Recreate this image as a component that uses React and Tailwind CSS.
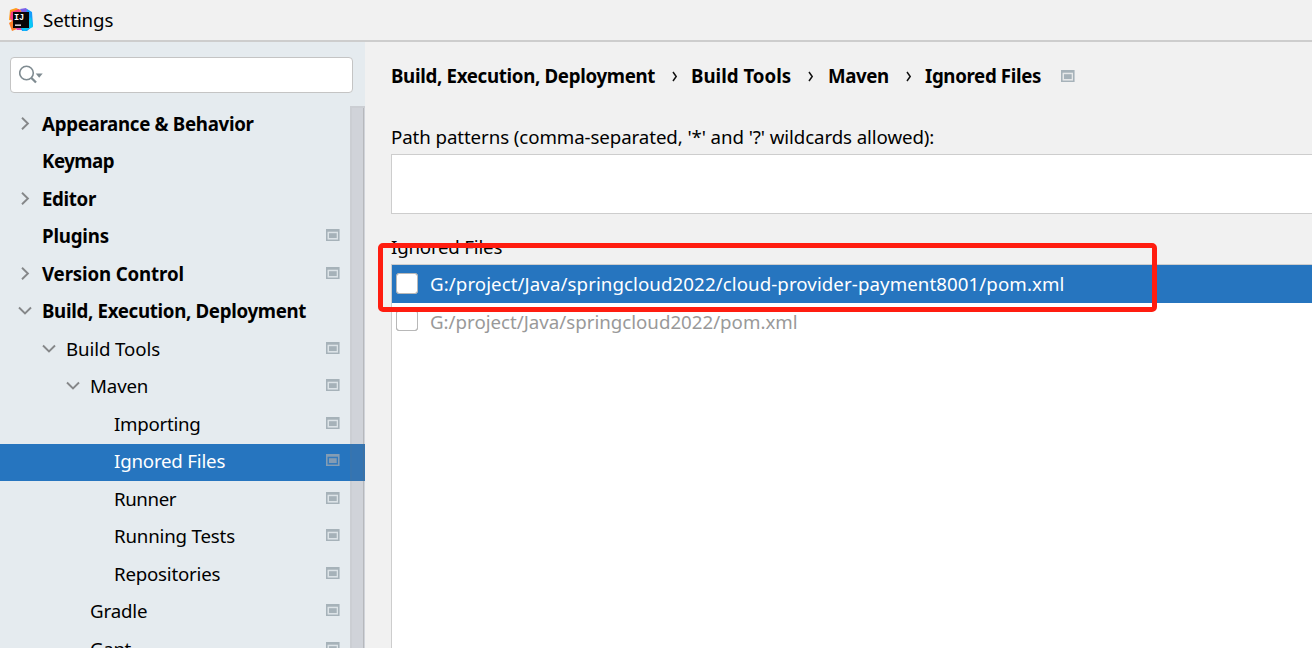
import React from "react";

const ROWS = [
  { label: "Appearance & Behavior", indent: "pl-[18px]", arrow: "right", bold: true, track: "tracking-[-0.3px]" },
  { label: "Keymap", indent: "pl-[18px]", bold: true, track: "tracking-[-0.5px]" },
  { label: "Editor", indent: "pl-[18px]", arrow: "right", bold: true, track: "tracking-[-0.35px]" },
  { label: "Plugins", indent: "pl-[18px]", bold: true, badge: true, track: "tracking-[-0.2px]" },
  { label: "Version Control", indent: "pl-[18px]", arrow: "right", bold: true, badge: true, track: "tracking-[-0.15px]" },
  { label: "Build, Execution, Deployment", indent: "pl-[18px]", arrow: "down", bold: true, track: "tracking-[-0.32px]" },
  { label: "Build Tools", indent: "pl-[42px]", arrow: "down", badge: true, track: "tracking-[-0.1px]" },
  { label: "Maven", indent: "pl-[66px]", arrow: "down", badge: true, track: "tracking-[-0.15px]" },
  { label: "Importing", indent: "pl-[90px]", badge: true, track: "tracking-[-0.28px]" },
  { label: "Ignored Files", indent: "pl-[90px]", badge: true, selected: true, track: "tracking-[-0.2px]" },
  { label: "Runner", indent: "pl-[90px]", badge: true, track: "tracking-[-0.4px]" },
  { label: "Running Tests", indent: "pl-[90px]", badge: true, track: "tracking-[-0.18px]" },
  { label: "Repositories", indent: "pl-[90px]", badge: true, track: "tracking-[-0.22px]" },
  { label: "Gradle", indent: "pl-[66px]", badge: true, track: "tracking-[-0.15px]" },
  { label: "Gant", indent: "pl-[66px]", badge: true, track: "tracking-[-0.35px]" },
];

function ProjectBadge({ selected }) {
  const color = selected ? "#849db4" : "#a6b2b9";
  return (
    <svg width="14" height="12" viewBox="0 0 14 12" className="block shrink-0">
      <path fill={color} fillRule="evenodd" d="M0 0H13.5V12H0ZM1.6 2.7V10.4H12V2.7Z" />
      <path fill={color} d="M3 4.2H10.7V9H3Z" />
      <path fill={color} opacity="0.15" d="M13 0h1v12h-1zM2 3h10v7H2z" />
    </svg>
  );
}

function Arrow({ dir }) {
  return (
    <svg width="14" height="14" viewBox="0 0 14 14" className="block" fill="none" stroke="#858789" strokeWidth="1.9">
      {dir === "right" && <path d="M4 0.8L9.9 6.5L4 12.2" />}
      {dir === "down" && <path d="M1 3.5L7 9.4L13 3.5" />}
    </svg>
  );
}

function Logo() {
  return (
    <svg width="24" height="24" viewBox="0 0 24 24" className="block">
      <path fill="#ff9d19" d="M1 2L7 0L14 3L7 13L0 12Z" />
      <path fill="#fb3a82" d="M2 4L10 1L13 6L7 18L1 10Z" />
      <path fill="#ff8129" d="M0 15L6 11L8 21L3 23Z" />
      <path fill="#e848b0" d="M4 16L10 14L15 22L8 22Z" />
      <path fill="#7b60e8" d="M11 1L17 0L21 5L15 9Z" />
      <path fill="#149dfb" d="M18 1L23 4L24 18L18 23L13 23L11 17L17 7Z" />
      <path fill="#08c8f5" d="M22 9L24 19L15 23L12 20Z" />
      <rect x="4" y="4" width="16" height="16" fill="#080508" />
      <text x="5" y="12" fill="#fff" fontFamily="Liberation Mono, monospace" fontWeight="700" fontSize="8.5">IJ</text>
      <rect x="6" y="16.5" width="6" height="1.3" fill="#fff" />
    </svg>
  );
}

function Checkbox() {
  return <span className="block h-[21px] w-[22px] shrink-0 rounded-[3px] border-[1.5px] border-[#b0b0b0] bg-white outline-[0.5px] -outline-offset-1 outline-[#b8b8b8]" />;
}

function Crumb({ children, track, width }) {
  return <span className={`block font-bold whitespace-nowrap ${track} ${width}`}>{children}</span>;
}

function Separator() {
  return (
    <svg width="6" height="11" viewBox="0 0 6 11" className="block shrink-0" fill="none" stroke="#111" strokeWidth="1.5">
      <path d="M1 1L4.2 5.5L1 10" />
    </svg>
  );
}

export default function App() {
  return (
    <div className="relative flex h-[648px] w-[1312px] flex-col overflow-hidden bg-[#f1f1f1] font-['Noto_Sans','Open_Sans',sans-serif] text-[18.7px] leading-[28px] text-black">
      <header className="flex h-[42px] shrink-0 items-center border-b-2 border-[#cdcdcd] pl-[9px]">
        <Logo />
        <span className="ml-[10px] tracking-[-0.1px]">Settings</span>
      </header>

      <div className="flex min-h-0 flex-1">
        <aside className="flex w-[365px] shrink-0 flex-col bg-[#e5ebef] pt-[15px]">
          <div className="ml-[10px] flex h-[36px] w-[343px] shrink-0 items-center rounded-[4px] border-[1.5px] border-[#c4c4c4] bg-white pl-[8px]">
            <svg width="28" height="22" viewBox="0 0 28 22" className="block" fill="none">
              <circle cx="7.5" cy="9" r="6.8" stroke="#7f8b91" strokeWidth="1.6" />
              <path d="M12.2 13.7L17 18.5" stroke="#7f8b91" strokeWidth="2.3" />
              <path d="M16.7 9.5H23.7L20.2 13.7Z" fill="#7f8b91" />
            </svg>
          </div>

          <div className="relative mt-[13px] flex min-h-0 flex-1 overflow-hidden">
            <div className="flex w-full shrink-0 flex-col">
              {ROWS.map((row) => (
                <div
                  key={row.label}
                  className={`flex h-[37.5px] shrink-0 items-center ${row.indent} ${row.selected ? "bg-[#2675bf] text-white" : ""}`}
                >
                  <span className="mr-[10px] -mt-[2px] w-[14px]">{row.arrow && <Arrow dir={row.arrow} />}</span>
                  <span className={`-mt-[2px] flex-1 whitespace-nowrap ${row.track} ${row.bold ? "font-bold" : ""}`}>{row.label}</span>
                  <span className="mr-[25px] -mt-[4px]">{row.badge && <ProjectBadge selected={row.selected} />}</span>
                </div>
              ))}
            </div>
            <div className="absolute inset-y-0 right-0 flex w-[15px] border-t-2 border-l-2 border-[#7070700d] bg-[#73707830]">
              <div className="mr-px ml-auto h-full w-px bg-[#66666640]" />
            </div>
          </div>
        </aside>

        <main className="flex min-w-0 flex-1 flex-col pl-[26px]">
          <nav className="mt-[20px] flex h-[28px] items-center">
            <Crumb track="tracking-[-0.32px]" width="w-[281px]">Build, Execution, Deployment</Crumb>
            <Separator />
            <Crumb track="tracking-[0px]" width="ml-[13px] w-[117px]">Build Tools</Crumb>
            <Separator />
            <Crumb track="tracking-[-0.4px]" width="ml-[14px] w-[78px]">Maven</Crumb>
            <Separator />
            <Crumb track="tracking-[-0.36px]" width="ml-[13px] w-[136px]">Ignored Files</Crumb>
            <ProjectBadge />
          </nav>

          <label className="mt-[33px] h-[28px] tracking-[-0.09px] whitespace-nowrap">
            Path patterns (comma-separated, '*' and '?' wildcards allowed):
          </label>
          <div className="mt-[3px] h-[60px] shrink-0 border border-r-0 border-[#cdcdcd] bg-white" />

          <div className="mt-[19px] h-[28px] tracking-[-0.2px]">Ignored Files</div>
          <div className="mt-[3px] flex min-h-0 flex-1 flex-col border-t border-l border-[#cdcdcd] bg-white">
            <div className="flex h-[38px] shrink-0 items-center bg-[#2675bf] pl-[4px] text-white">
              <span className="-mt-[1px]"><Checkbox /></span>
              <span className="ml-[12px] tracking-[0.08px] whitespace-nowrap">G:/project/Java/springcloud2022/cloud-provider-payment8001/pom.xml</span>
            </div>
            <div className="flex h-[37px] shrink-0 items-center pl-[4px] text-[#999]">
              <span className="-mt-[2px]"><Checkbox /></span>
              <span className="ml-[12px] whitespace-nowrap">G:/project/Java/springcloud2022/pom.xml</span>
            </div>
          </div>
        </main>
      </div>

      <div className="absolute top-[243px] left-[378px] h-[69px] w-[779px] rounded-[5px] border-[5px] border-[#ff1d10]" />
    </div>
  );
}
